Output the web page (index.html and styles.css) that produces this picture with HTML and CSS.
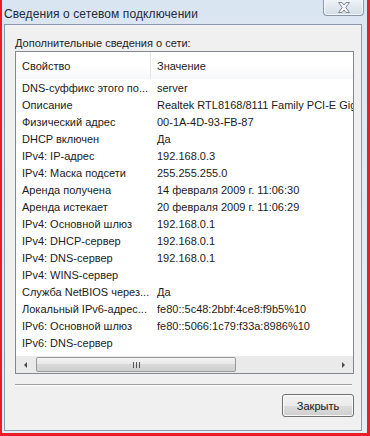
FILE: index.html
```html
<!DOCTYPE html>
<html lang="ru">
<head>
  <meta charset="UTF-8">
  <title>Сведения о сетевом подключении</title>
  <link rel="stylesheet" href="styles.css">
</head>
<body>
  <div class="window">
    <div class="titlebar">
      <span class="caption">Сведения о сетевом подключении</span>
      <div class="close">
        <svg width="14" height="11" viewBox="0 0 14 11">
          <path d="M1.5 0.5 H5 L7 3 L9 0.5 H12.5 L8.8 5.5 L12.5 10.5 H9 L7 8 L5 10.5 H1.5 L5.2 5.5 Z" fill="#f4f6f9" stroke="#7d8794" stroke-width="1" stroke-linejoin="round"/>
        </svg>
      </div>
    </div>

    <div class="client">
      <div class="label">Дополнительные сведения о сети:</div>

      <div class="list">
        <div class="header">
          <div class="col-prop">Свойство</div>
          <div class="col-val">Значение</div>
        </div>
        <div class="rows">
          <div class="row"><div class="col-prop">DNS-суффикс этого по...</div><div class="col-val">server</div></div>
          <div class="row"><div class="col-prop">Описание</div><div class="col-val">Realtek RTL8168/8111 Family PCI-E Gigabit Ethernet NIC</div></div>
          <div class="row"><div class="col-prop">Физический адрес</div><div class="col-val">00-1A-4D-93-FB-87</div></div>
          <div class="row"><div class="col-prop">DHCP включен</div><div class="col-val">Да</div></div>
          <div class="row"><div class="col-prop">IPv4: IP-адрес</div><div class="col-val">192.168.0.3</div></div>
          <div class="row"><div class="col-prop">IPv4: Маска подсети</div><div class="col-val">255.255.255.0</div></div>
          <div class="row"><div class="col-prop">Аренда получена</div><div class="col-val">14 февраля 2009 г. 11:06:30</div></div>
          <div class="row"><div class="col-prop">Аренда истекает</div><div class="col-val">20 февраля 2009 г. 11:06:29</div></div>
          <div class="row"><div class="col-prop">IPv4: Основной шлюз</div><div class="col-val">192.168.0.1</div></div>
          <div class="row"><div class="col-prop">IPv4: DHCP-сервер</div><div class="col-val">192.168.0.1</div></div>
          <div class="row"><div class="col-prop">IPv4: DNS-сервер</div><div class="col-val">192.168.0.1</div></div>
          <div class="row"><div class="col-prop">IPv4: WINS-сервер</div><div class="col-val"></div></div>
          <div class="row"><div class="col-prop">Служба NetBIOS через...</div><div class="col-val">Да</div></div>
          <div class="row"><div class="col-prop">Локальный IPv6-адрес...</div><div class="col-val">fe80::5c48:2bbf:4ce8:f9b5%10</div></div>
          <div class="row"><div class="col-prop">IPv6: Основной шлюз</div><div class="col-val">fe80::5066:1c79:f33a:8986%10</div></div>
          <div class="row"><div class="col-prop">IPv6: DNS-сервер</div><div class="col-val"></div></div>
        </div>

        <div class="hscroll">
          <div class="arrow-btn"><span class="tri tri-left"></span></div>
          <div class="track">
            <div class="thumb"><span class="grip"></span></div>
          </div>
          <div class="arrow-btn"><span class="tri tri-right"></span></div>
        </div>
      </div>

      <div class="separator"></div>

      <div class="buttons">
        <button class="btn">Закрыть</button>
      </div>
    </div>
  </div>
</body>
</html>
```

FILE: styles.css
```css
* {
  box-sizing: border-box;
}

body {
  margin: 0;
  width: 370px;
  height: 436px;
  overflow: hidden;
  font-family: "Liberation Sans", Arial, sans-serif;
  font-size: 11px;
  color: #1b1b1b;
  background: #e8202a;
}

.window {
  width: 370px;
  height: 436px;
  border-left: 2px solid #ea1c24;
  border-right: 3px solid #ea1c24;
  border-bottom: 3px solid #ea1c24;
  background: linear-gradient(#d9e5f2, #dfe8f2 60px, #e6edf5);
  padding: 0 5px 2px 2px;
  display: flex;
  flex-direction: column;
}

.titlebar {
  height: 24px;
  display: flex;
  align-items: flex-start;
  justify-content: space-between;
  flex-shrink: 0;
}

.caption {
  font-size: 12px;
  color: #1e2a3a;
  padding: 7px 0 0 0;
  letter-spacing: 0.1px;
}

.close {
  width: 41px;
  height: 17px;
  margin-top: -1px;
  margin-right: -2px;
  border: 1px solid #8897ab;
  border-top: none;
  border-radius: 0 0 4px 4px;
  background: linear-gradient(#f3f6fa, #e1e8f0 50%, #d4dde8);
  box-shadow: inset 0 0 0 1px rgba(255,255,255,0.7);
  display: flex;
  align-items: center;
  justify-content: center;
}

.client {
  flex: 1;
  background: #f0f0f0;
  border: 1px solid #8d9aab;
  padding: 11px 7px 0 10px;
  display: flex;
  flex-direction: column;
}

.label {
  height: 15px;
  line-height: 14px;
}

.list {
  height: 323px;
  background: #fff;
  border: 1px solid #828790;
  display: flex;
  flex-direction: column;
  overflow: hidden;
}

.header {
  height: 27px;
  display: flex;
  align-items: center;
  background: linear-gradient(#fff, #fff 55%, #f6f7f9);
  flex-shrink: 0;
}

.header .col-prop {
  border-right: 1px solid #e3e5e8;
  height: 100%;
  display: flex;
  align-items: center;
}

.rows {
  flex: 1;
}

.row {
  height: 17px;
  display: flex;
  align-items: center;
  white-space: nowrap;
}

.col-prop {
  width: 135px;
  padding-left: 6px;
  flex-shrink: 0;
  white-space: nowrap;
  overflow: hidden;
}

.col-val {
  padding-left: 6px;
  white-space: nowrap;
}

.hscroll {
  height: 17px;
  display: flex;
  align-items: stretch;
  background: #eaeaea;
  flex-shrink: 0;
}

.arrow-btn {
  width: 19px;
  display: flex;
  align-items: center;
  justify-content: center;
  flex-shrink: 0;
}

.tri {
  width: 0;
  height: 0;
  border-top: 3px solid transparent;
  border-bottom: 3px solid transparent;
}

.tri-left {
  border-right: 3px solid #4a4a4a;
}

.tri-right {
  border-left: 3px solid #4a4a4a;
}

.track {
  flex: 1;
  padding: 1px 0;
}

.thumb {
  width: 200px;
  height: 100%;
  margin-left: 1px;
  border: 1px solid #999;
  border-radius: 2px;
  background: linear-gradient(#f4f4f4, #e9e9e9 45%, #d9d9d9 50%, #cfcfcf);
  display: flex;
  align-items: center;
  justify-content: center;
}

.grip {
  width: 7px;
  height: 6px;
  background: repeating-linear-gradient(90deg, #555 0 1px, transparent 1px 3px);
}

.separator {
  margin-top: 10px;
  margin-right: 2px;
  height: 2px;
  border-top: 1px solid #a0a0a0;
  border-bottom: 1px solid #fff;
}

.buttons {
  display: flex;
  justify-content: flex-end;
  padding-top: 8px;
}

.btn {
  width: 72px;
  height: 23px;
  font-family: "Liberation Sans", Arial, sans-serif;
  font-size: 11px;
  color: #1b1b1b;
  border: 1px solid #707070;
  border-radius: 3px;
  background: linear-gradient(#f2f2f2, #ebebeb 50%, #dddddd 51%, #cfcfcf);
  box-shadow: inset 0 0 0 1px rgba(255,255,255,0.8);
  padding: 0;
}
```
